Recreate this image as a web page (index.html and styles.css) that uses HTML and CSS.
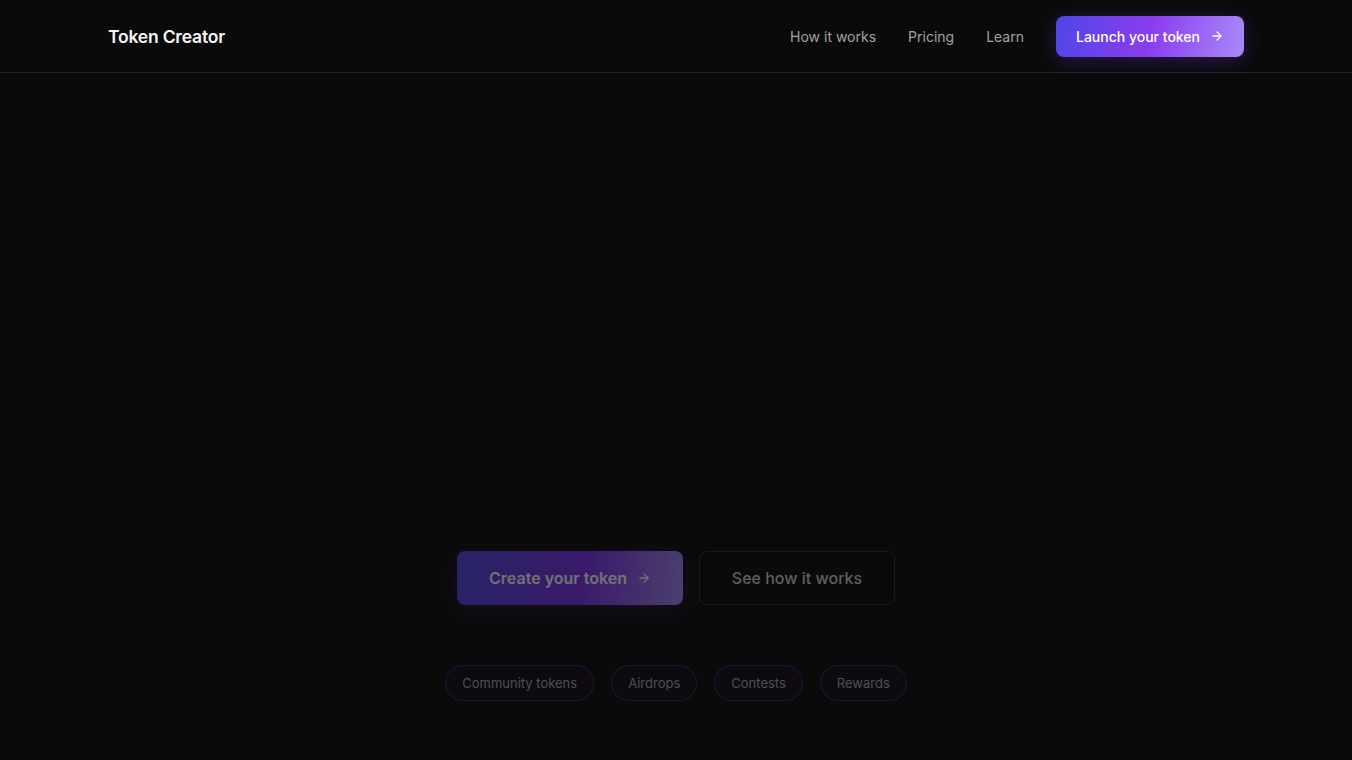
FILE: index.html
```html
<!DOCTYPE html>
<html lang="en">
<head>
  <meta charset="UTF-8" />
  <meta name="viewport" content="width=device-width, initial-scale=1.0"/>
  <title>Token Creator</title>
  <link rel="stylesheet" href="styles.css">
</head>
<body>
  <header class="site-header">
    <div class="container nav-row">
      <a class="logo" href="#">Token Creator</a>
      <nav class="nav">
        <a href="#">How it works</a>
        <a href="#">Pricing</a>
        <a href="#">Learn</a>
        <a class="btn-launch" href="#">Launch your token
          <svg width="14" height="14" viewBox="0 0 24 24" fill="none" stroke="currentColor" stroke-width="2.2" stroke-linecap="round" stroke-linejoin="round"><path d="M5 12h14"/><path d="M12 5l7 7-7 7"/></svg>
        </a>
      </nav>
    </div>
  </header>

  <main class="hero">
    <div class="hero-actions fade">
      <a class="btn-primary" href="#">Create your token
        <svg width="14" height="14" viewBox="0 0 24 24" fill="none" stroke="currentColor" stroke-width="2.2" stroke-linecap="round" stroke-linejoin="round"><path d="M5 12h14"/><path d="M12 5l7 7-7 7"/></svg>
      </a>
      <a class="btn-ghost" href="#">See how it works</a>
    </div>

    <div class="tags">
      <span class="tag">Community tokens</span>
      <span class="tag">Airdrops</span>
      <span class="tag">Contests</span>
      <span class="tag">Rewards</span>
    </div>
  </main>
</body>
</html>
```

FILE: styles.css
```css
* {
  margin: 0;
  padding: 0;
  box-sizing: border-box;
}

body {
  font-family: 'Inter', 'Noto Sans', sans-serif;
  background: #0a0a0a;
  color: #fff;
  min-height: 100vh;
}

a {
  color: inherit;
  text-decoration: none;
}

.container {
  width: 1136px;
  margin: 0 auto;
}

.site-header {
  height: 73px;
  border-bottom: 1px solid #222;
}

.nav-row {
  height: 72px;
  display: flex;
  align-items: center;
  justify-content: space-between;
}

.logo {
  font-size: 17.5px;
  font-weight: 600;
  letter-spacing: -0.2px;
  color: #f5f5f5;
}

.nav {
  display: flex;
  align-items: center;
  gap: 32px;
  font-size: 14px;
  color: #a3a3a3;
}

.btn-launch {
  display: flex;
  align-items: center;
  gap: 10px;
  height: 41px;
  padding: 0 20px;
  border-radius: 8px;
  color: #fff;
  font-weight: 500;
  background: linear-gradient(100deg, #5046e6 0%, #8b3cf0 50%, #a88af7 100%);
  box-shadow: 0 4px 20px rgba(124, 58, 237, 0.3);
}

.hero {
  padding-top: 478px;
  display: flex;
  flex-direction: column;
  align-items: center;
}

.hero-actions {
  display: flex;
  gap: 16px;
}

.fade {
  opacity: 0.42;
}

.btn-primary {
  display: flex;
  align-items: center;
  gap: 10px;
  height: 54px;
  width: 226px;
  justify-content: center;
  border-radius: 8px;
  font-size: 16px;
  font-weight: 600;
  color: #fff;
  background: linear-gradient(100deg, #5046e6 0%, #7c2ff0 55%, #a78bfa 100%);
  box-shadow: 0 6px 24px rgba(124, 58, 237, 0.25);
}

.btn-ghost {
  display: flex;
  align-items: center;
  justify-content: center;
  height: 54px;
  width: 196px;
  border: 1px solid #333;
  border-radius: 8px;
  font-size: 16px;
  font-weight: 500;
  color: #d4d4d4;
}

.tags {
  margin-top: 60px;
  display: flex;
  gap: 17px;
}

.tag {
  height: 36px;
  display: flex;
  align-items: center;
  padding: 0 16px;
  border-radius: 18px;
  border: 1px solid rgba(124, 58, 237, 0.18);
  background: rgba(124, 58, 237, 0.03);
  font-size: 13px;
  color: #4f4f57;
}
```
